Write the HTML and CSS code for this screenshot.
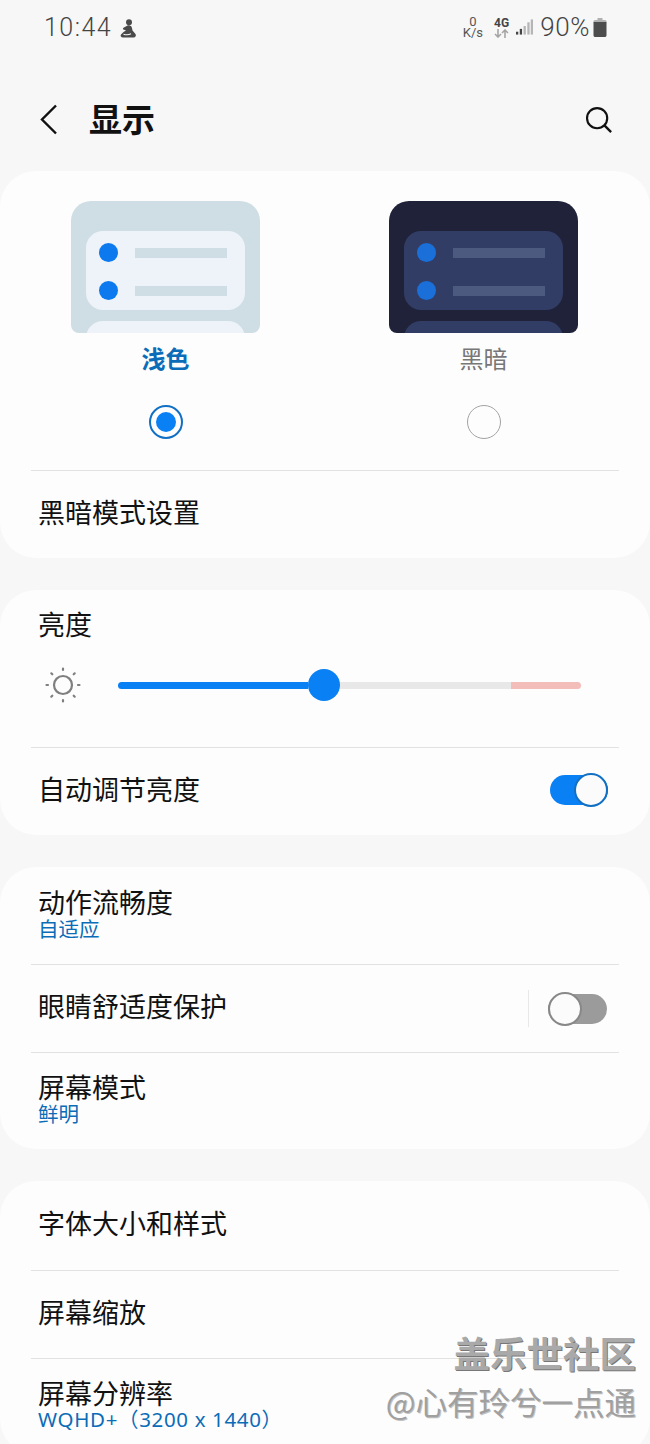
FILE: index.html
```html
<!DOCTYPE html>
<html lang="zh-CN">
<head>
    <meta charset="UTF-8">
    <meta name="viewport" content="width=device-width, initial-scale=1.0">
    <title>显示</title>
    <link rel="stylesheet" href="styles.css">
</head>
<body>
    <div class="screen">
        <div class="status-bar">
            <div class="status-left">
                <span class="clock">10:44</span>
                <svg class="status-figure" width="17" height="19" viewBox="0 0 17 19">
                    <circle cx="9" cy="3.2" r="3" fill="#4a4a4a"/>
                    <path d="M7.5 6.5c2.5-.5 4 .5 4.5 2.5l.5 2.5 3 3.5c1 1.500 0 3.500-2 3.500H3c-2 0-3-1.500-2-3L3.500 13 6 11.500 3.500 10.500c-.8-.5-.8-1.200 0-1.800z" fill="#4a4a4a"/>
                    <path d="M3.500 15.200c2.500.8 5 .8 7.500-.4" fill="none" stroke="#f7f7f7" stroke-width="1.100"/>
                </svg>
            </div>
            <div class="status-right">
                <div class="net-speed"><span>0</span><span>K/s</span></div>
                <div class="net-type">
                    <span>4G</span>
                    <svg width="15" height="9" viewBox="0 0 15 9">
                        <path d="M4 0v8M1 5l3 3 3-3" fill="none" stroke="#a5a5a5" stroke-width="1.6"/>
                        <path d="M11 9V1M8 4l3-3 3 3" fill="none" stroke="#a5a5a5" stroke-width="1.6"/>
                    </svg>
                </div>
                <svg class="signal" width="17" height="18" viewBox="0 0 18 18">
                    <rect x="0" y="14" width="2.4" height="3" fill="#444"/>
                    <rect x="4" y="11" width="2.4" height="6" fill="#444"/>
                    <rect x="8" y="8" width="2.4" height="9" fill="#b5b5b5"/>
                    <rect x="12" y="4" width="2.4" height="13" fill="#b5b5b5"/>
                    <rect x="15.6" y="1" width="2.4" height="16" fill="#b5b5b5"/>
                </svg>
                <span class="battery-text">90%</span>
                <svg class="battery" width="14" height="19" viewBox="0 0 14 19">
                    <path d="M4.5 0h5v2h-5z" fill="#b0b0b0"/>
                    <rect x="0.5" y="2" width="13" height="3" rx="1.5" fill="#b0b0b0"/>
                    <path d="M.5 4h13v13.2c0 1-.8 1.8-1.8 1.8H2.3c-1 0-1.8-.8-1.8-1.8z" fill="#4d4d4d"/>
                </svg>
            </div>
        </div>

        <div class="toolbar">
            <svg class="back" width="18" height="31" viewBox="0 0 18 31">
                <path d="M16 1.5 2 15.5l14 14" fill="none" stroke="#111" stroke-width="2.4"/>
            </svg>
            <h1 class="title">显示</h1>
            <svg class="search" width="28" height="28" viewBox="0 0 30 30">
                <circle cx="13" cy="13" r="10.8" fill="none" stroke="#111" stroke-width="2.3"/>
                <path d="M20.8 20.8 28 28" stroke="#111" stroke-width="2.5"/>
            </svg>
        </div>

        <div class="card card-theme">
            <div class="theme-options">
                <div class="theme-option">
                    <div class="preview preview-light">
                        <div class="preview-panel">
                            <div class="preview-line"><i class="dot"></i><i class="bar"></i></div>
                            <div class="preview-line"><i class="dot"></i><i class="bar"></i></div>
                        </div>
                        <div class="preview-panel preview-next"></div>
                    </div>
                    <div class="theme-label active">浅色</div>
                    <div class="radio checked"></div>
                </div>
                <div class="theme-option">
                    <div class="preview preview-dark">
                        <div class="preview-panel">
                            <div class="preview-line"><i class="dot"></i><i class="bar"></i></div>
                            <div class="preview-line"><i class="dot"></i><i class="bar"></i></div>
                        </div>
                        <div class="preview-panel preview-next"></div>
                    </div>
                    <div class="theme-label">黑暗</div>
                    <div class="radio"></div>
                </div>
            </div>
            <div class="divider"></div>
            <div class="row"><span class="row-title">黑暗模式设置</span></div>
        </div>

        <div class="card">
            <div class="brightness-title row-title">亮度</div>
            <div class="brightness">
                <svg width="38" height="38" viewBox="0 0 38 38">
                    <circle cx="19" cy="19" r="9" fill="none" stroke="#7f7f7f" stroke-width="2.2"/>
                    <g stroke="#7f7f7f" stroke-width="2.2" stroke-linecap="round">
                        <path d="M19 2.5v1.5M19 34v1.5M2.5 19H4M34 19h1.5M7.3 7.3l1 1M29.700 29.700l1 1M7.3 30.700l1-1M29.700 8.3l1-1"/>
                    </g>
                </svg>
                <div class="slider">
                    <div class="slider-fill"></div>
                    <div class="slider-thumb"></div>
                    <div class="slider-rest"></div>
                    <div class="slider-high"></div>
                </div>
            </div>
            <div class="divider"></div>
            <div class="row">
                <span class="row-title">自动调节亮度</span>
                <div class="switch on"><div class="knob"></div></div>
            </div>
        </div>

        <div class="card">
            <div class="row row-tall row-first">
                <div class="two-line">
                    <div class="row-title">动作流畅度</div>
                    <div class="row-sub">自适应</div>
                </div>
            </div>
            <div class="divider"></div>
            <div class="row row-mid">
                <span class="row-title">眼睛舒适度保护</span>
                <div class="row-end">
                    <div class="v-line"></div>
                    <div class="switch off"><div class="knob"></div></div>
                </div>
            </div>
            <div class="divider"></div>
            <div class="row row-tall">
                <div class="two-line">
                    <div class="row-title">屏幕模式</div>
                    <div class="row-sub">鲜明</div>
                </div>
            </div>
        </div>

        <div class="card">
            <div class="row row-mid row-top">
                <span class="row-title">字体大小和样式</span>
            </div>
            <div class="divider"></div>
            <div class="row row-mid"><span class="row-title">屏幕缩放</span></div>
            <div class="divider"></div>
            <div class="row row-tall">
                <div class="two-line">
                    <div class="row-title">屏幕分辨率</div>
                    <div class="row-sub row-sub-latin">WQHD+（3200 x 1440）</div>
                </div>
            </div>
        </div>

        <div class="watermark">
            <div class="wm-main">盖乐世社区</div>
            <div class="wm-user">@心有玲兮一点通</div>
        </div>
    </div>
</body>
</html>
```

FILE: styles.css
```css
* {
    box-sizing: border-box;
}
html, body {
    margin: 0;
    padding: 0;
}
body {
    font-family: "Noto Sans CJK SC", "Noto Sans", sans-serif;
    background: #f7f7f7;
    color: #111;
}
.screen {
    position: relative;
    width: 650px;
    height: 1444px;
    overflow: hidden;
    background: #f7f7f7;
}

/* status bar */
.status-bar {
    height: 56px;
    padding: 0 43px 2px 44px;
    display: flex;
    justify-content: space-between;
    align-items: center;
}
.status-left, .status-right {
    display: flex;
    align-items: center;
}
.clock {
    font-family: Roboto, sans-serif;
    font-size: 25px;
    font-weight: 300;
    letter-spacing: 1.5px;
    color: #444;
}
.status-figure {
    margin-left: 8px;
    margin-top: 2px;
}
.net-speed {
    display: flex;
    flex-direction: column;
    align-items: center;
    font-family: Roboto, sans-serif;
    font-size: 13px;
    line-height: 11px;
    color: #555;
}
.net-type {
    margin-left: 11px;
    display: flex;
    flex-direction: column;
    align-items: center;
    font-family: Roboto, sans-serif;
    font-size: 12px;
    font-weight: 700;
    line-height: 12px;
    color: #444;
}
.signal {
    margin-left: 7px;
}
.battery-text {
    margin-left: 7px;
    font-family: Roboto, sans-serif;
    font-size: 26px;
    font-weight: 300;
    letter-spacing: 0.6px;
    color: #444;
}
.battery {
    margin-left: 3px;
}

/* toolbar */
.toolbar {
    height: 115px;
    padding: 12px 37px 0 40px;
    display: flex;
    align-items: center;
}
.title {
    margin: 0 0 3px 31px;
    font-size: 33px;
    font-weight: 700;
    line-height: 40px;
    flex: 1;
}

/* cards */
.card {
    background: #fdfdfd;
    border-radius: 36px;
    margin-bottom: 32px;
    padding-bottom: 3px;
}
.divider {
    height: 1px;
    margin: 0 31px;
    background: #e2e2e2;
}
.row {
    height: 84px;
    padding: 0 43px 2px 38px;
    display: flex;
    align-items: center;
    justify-content: space-between;
}
.row-mid {
    height: 87px;
    padding-bottom: 6px;
}
.row-top {
    height: 89px;
}
.row-tall {
    height: 93px;
    padding-bottom: 3px;
}
.row-first {
    height: 97px;
    padding-bottom: 5px;
}
.row-title {
    font-size: 27px;
    line-height: 34px;
    color: #111;
}
.two-line .row-title {
    line-height: 30px;
}
.row-sub {
    font-size: 20.5px;
    line-height: 22px;
    color: #0b6cb8;
}
.row-sub-latin {
    font-family: "Noto Sans", "Noto Sans CJK SC", sans-serif;
    font-size: 20.5px;
    letter-spacing: 0.65px;
}

/* theme chooser */
.card-theme {
    padding-top: 30px;
}
.theme-options {
    display: grid;
    grid-template-columns: 189px 189px;
    column-gap: 129px;
    padding: 0 71px 31px 71px;
}
.theme-option {
    display: flex;
    flex-direction: column;
    align-items: center;
}
.preview {
    width: 189px;
    height: 132px;
    border-radius: 20px 20px 8px 8px;
    overflow: hidden;
    padding: 30px 15px 0;
}
.preview-light {
    background: #cfdee4;
}
.preview-dark {
    background: #1f2239;
}
.preview-panel {
    height: 79px;
    border-radius: 17px;
    padding: 12px 18px 0 13px;
}
.preview-light .preview-panel {
    background: #edf3f9;
}
.preview-dark .preview-panel {
    background: #323d66;
}
.preview-next {
    margin-top: 11px;
    height: 40px;
}
.preview-line {
    height: 19px;
    margin-bottom: 19px;
    display: flex;
    align-items: center;
    justify-content: space-between;
}
.dot {
    width: 19px;
    height: 19px;
    border-radius: 50%;
    background: #0c79ee;
}
.preview-dark .dot {
    background: #1a6fd8;
}
.bar {
    width: 92px;
    height: 10px;
    background: #cfdee4;
}
.preview-dark .bar {
    background: #4d5a80;
}
.theme-label {
    margin-top: 8px;
    font-size: 24px;
    line-height: 34px;
    color: #777;
}
.theme-label.active {
    color: #0b6cb8;
    font-weight: 700;
}
.radio {
    margin-top: 30px;
    width: 34px;
    height: 34px;
    border-radius: 50%;
    border: 1.5px solid #a3a3a3;
    background: #fdfdfd;
}
.radio.checked {
    border: 2px solid #1170c4;
    display: flex;
    align-items: center;
    justify-content: center;
}
.radio.checked::after {
    content: "";
    width: 20px;
    height: 20px;
    border-radius: 50%;
    background: #0a80f5;
}

/* brightness */
.brightness-title {
    padding: 17px 38px 0;
}
.brightness {
    display: flex;
    align-items: center;
    padding: 25px 69px 43px 44px;
}
.slider {
    margin-left: 36px;
    flex: 1;
    height: 32px;
    display: flex;
    align-items: center;
}
.slider-fill {
    width: 190px;
    height: 7px;
    background: #0a80f5;
    border-radius: 4px 0 0 4px;
}
.slider-thumb {
    width: 32px;
    height: 32px;
    border-radius: 50%;
    background: #0a80f5;
}
.slider-rest {
    flex: 1;
    height: 7px;
    background: #e8e8e8;
}
.slider-high {
    width: 70px;
    height: 7px;
    background: #f3bdb9;
    border-radius: 0 4px 4px 0;
}

/* switches */
.switch {
    position: relative;
    width: 58px;
    height: 30px;
    border-radius: 15px;
}
.switch .knob {
    position: absolute;
    top: -2px;
    width: 34px;
    height: 34px;
    border-radius: 50%;
    background: #fbfbfb;
}
.switch.on {
    background: #0a80f5;
    margin: 2px -1px 0 0;
}
.switch.on .knob {
    right: 0;
    border: 2px solid #1170c4;
}
.switch.off {
    width: 59px;
    background: #9b9b9b;
}
.switch.off .knob {
    left: 0;
    border: 2px solid #888;
}
.row-end {
    display: flex;
    align-items: center;
    margin-top: 6px;
}
.v-line {
    width: 1px;
    height: 37px;
    background: #e8e8e8;
    margin-right: 19px;
}

/* watermark laid over the last card */
.watermark {
    position: absolute;
    right: 14px;
    bottom: 24px;
    text-align: right;
}
.wm-main {
    font-size: 36.5px;
    font-weight: 700;
    line-height: 44px;
    color: #a9a9a9;
    text-shadow: 1px 1px 0 #777;
}
.wm-user {
    margin-top: 7px;
    font-size: 31.5px;
    line-height: 38px;
    color: #a0a0a0;
    text-shadow: 1px 1px 0 #c4c4c4;
}
```
